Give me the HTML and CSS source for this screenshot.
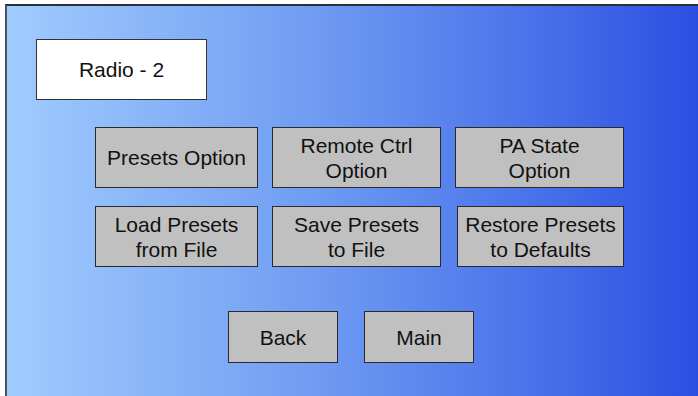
FILE: index.html
```html
<!DOCTYPE html>
<html lang="en">
<head>
    <meta charset="UTF-8">
    <title>Radio - 2</title>
    <link rel="stylesheet" href="styles.css">
</head>
<body>
    <div class="tela">
        <div class="titulo">Radio - 2</div>

        <div class="opcoes">
            <button class="botao">Presets Option</button>
            <button class="botao">Remote Ctrl<br>Option</button>
            <button class="botao">PA State<br>Option</button>
            <button class="botao">Load Presets<br>from File</button>
            <button class="botao">Save Presets<br>to File</button>
            <button class="botao ultimo">Restore Presets<br>to Defaults</button>
        </div>

        <div class="navegacao">
            <button class="botao nav">Back</button>
            <button class="botao nav">Main</button>
        </div>
    </div>
</body>
</html>
```

FILE: styles.css
```css
html, body {
    margin: 0;
    height: 100%;
    overflow: hidden;
    background-color: #ffffff;
}
body {
    padding: 4px 0 0 5px;
    box-sizing: border-box;
    font-family: "Liberation Sans", Arial, sans-serif;
}
.tela {
    height: 100%;
    border-top: 2px solid #2a2f3a;
    border-left: 2px solid #4a5060;
    background: linear-gradient(to right, #a0ccfe 0%, #6f9bf2 45%, #4a74ea 75%, #2a4fe2 100%);
    padding: 33px 0 0 29px;
    box-sizing: border-box;
}
.titulo {
    width: 171px;
    height: 61px;
    box-sizing: border-box;
    background-color: white;
    border: 1px solid #333;
    display: flex;
    align-items: center;
    justify-content: center;
    font-size: 21px;
    color: #111;
}
.opcoes {
    display: grid;
    grid-template-columns: 163px 169px 169px;
    grid-auto-rows: 61px;
    column-gap: 14px;
    row-gap: 18px;
    margin: 27px 0 0 59px;
}
.botao {
    background-color: #c0c0c0;
    border: 1px solid #2a2a2a;
    border-radius: 0;
    padding: 0;
    font-family: "Liberation Sans", Arial, sans-serif;
    font-size: 21px;
    line-height: 25px;
    color: #111;
    text-align: center;
}
.ultimo {
    margin-left: 2px;
}
.navegacao {
    display: flex;
    gap: 26px;
    margin: 44px 0 0 192px;
}
.nav {
    width: 110px;
    height: 52px;
}
```
